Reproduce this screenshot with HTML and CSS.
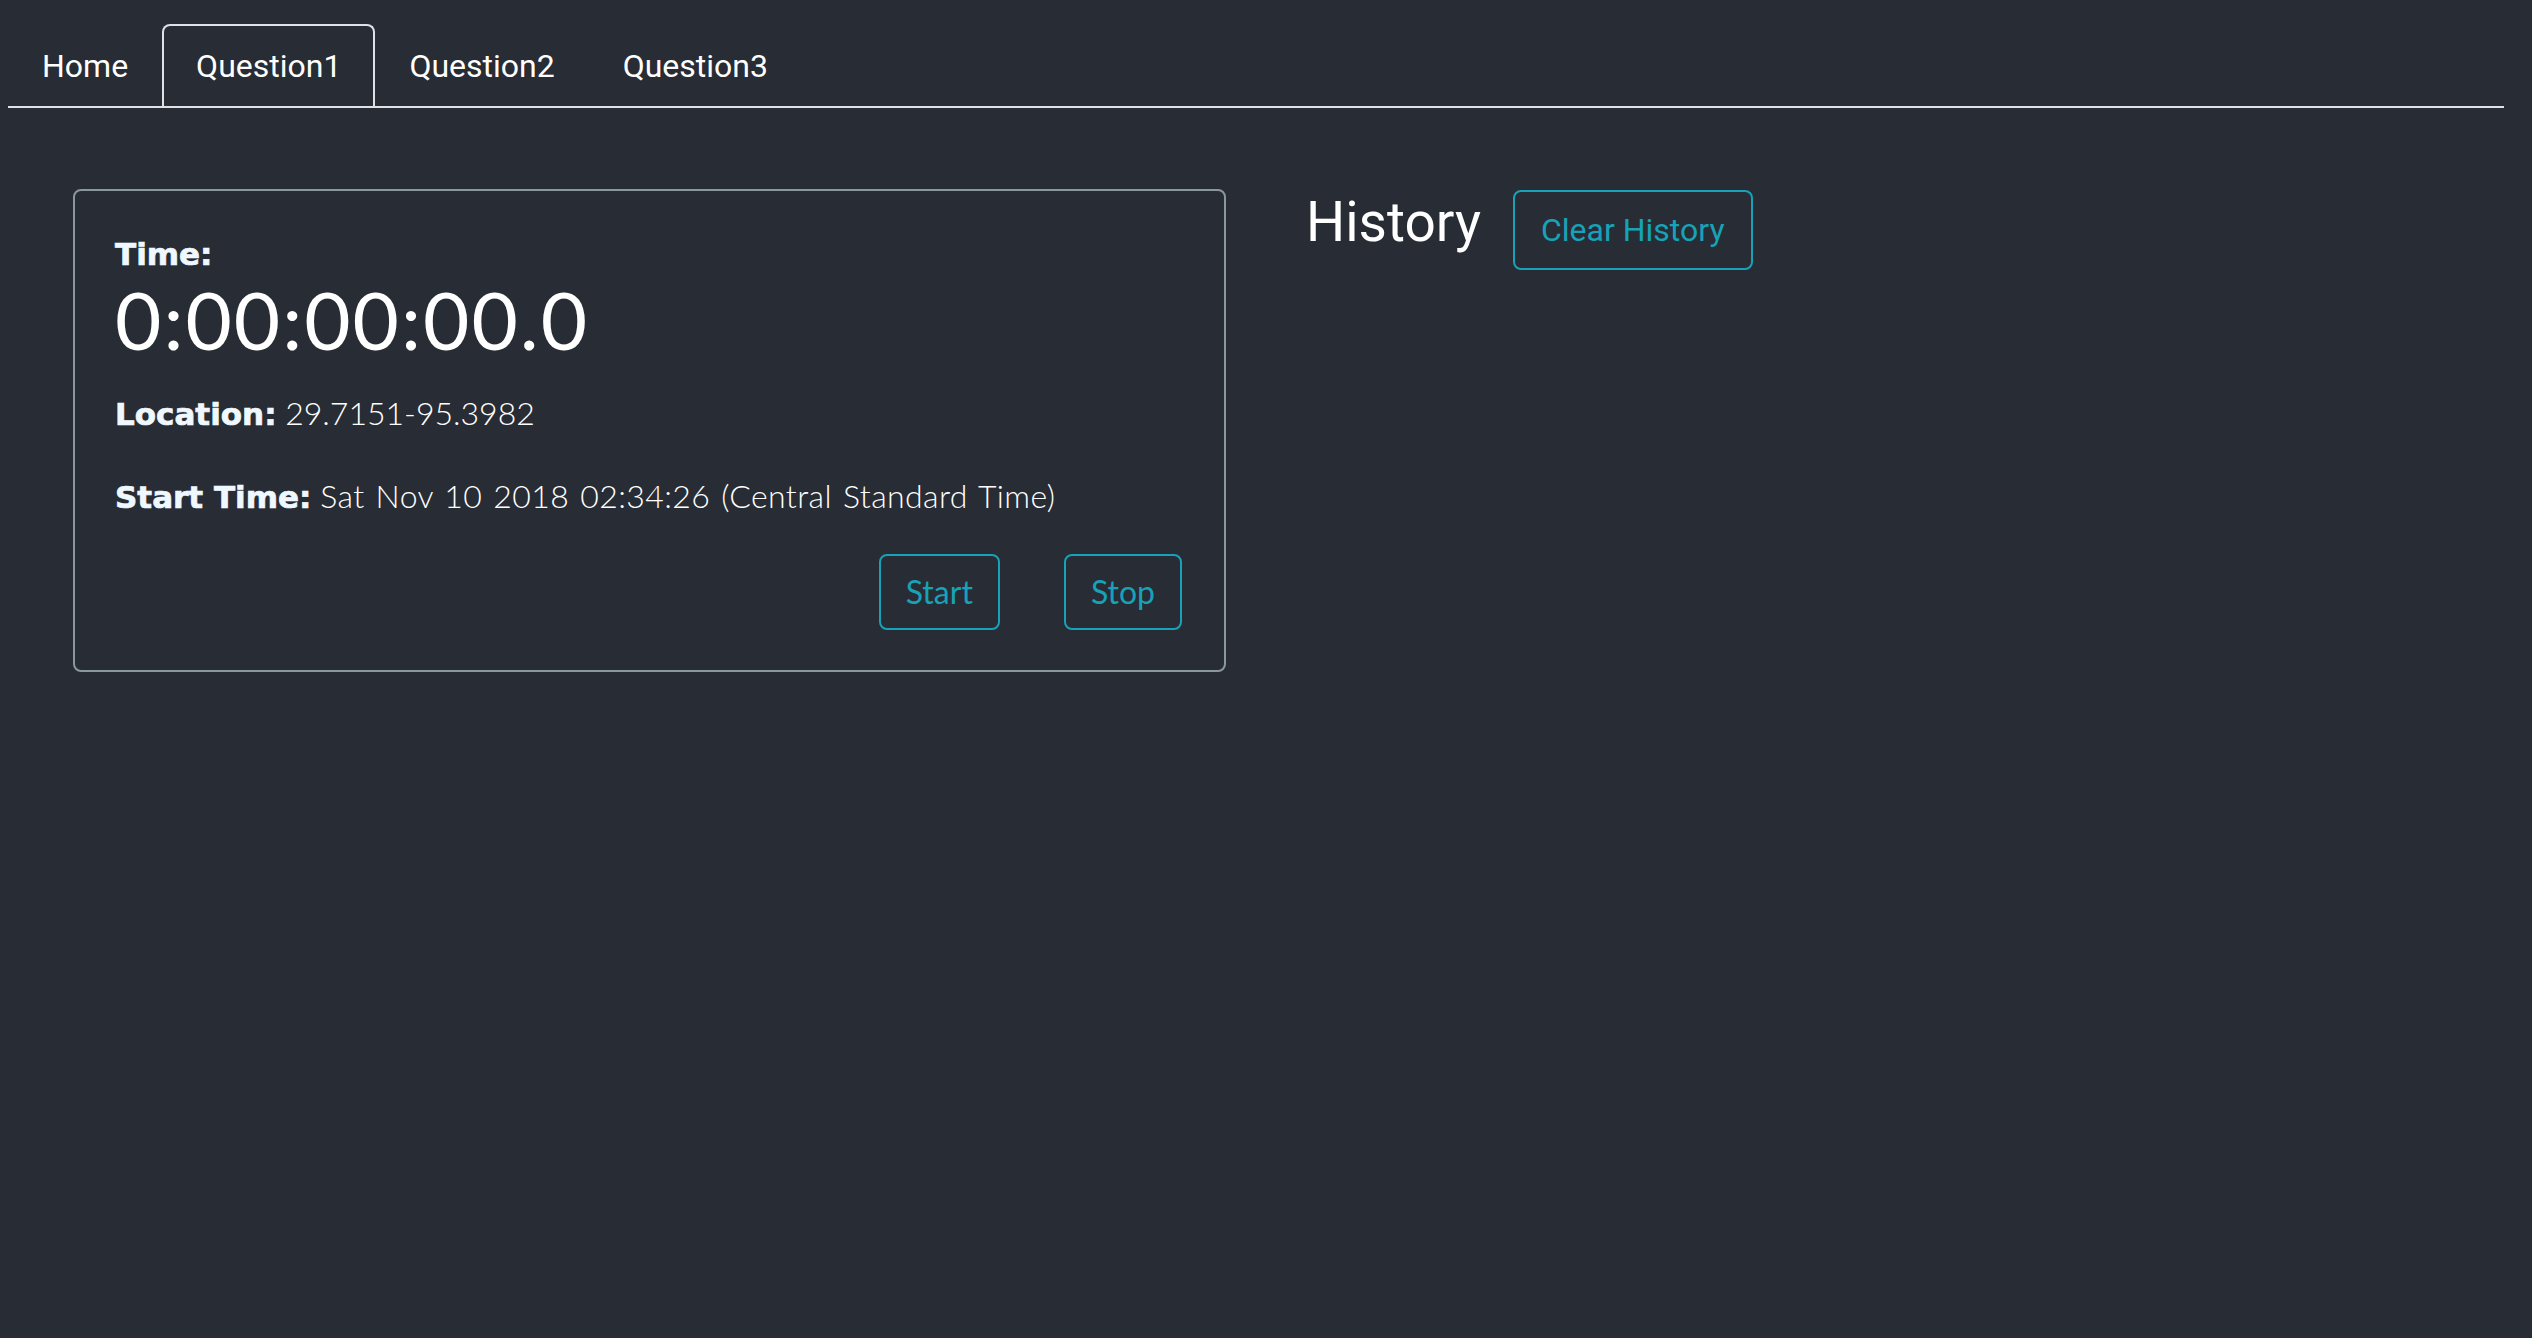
FILE: index.html
```html
<!DOCTYPE html>
<html lang="en">
<head>
<meta charset="utf-8">
<title>Question1</title>
<link rel="stylesheet" href="styles.css">
</head>
<body>
<nav class="tabs">
  <a class="tab">Home</a>
  <a class="tab active">Question1</a>
  <a class="tab">Question2</a>
  <a class="tab">Question3</a>
</nav>
<main class="row">
  <section class="card">
    <div class="label-line"><b class="label">Time:</b></div>
    <h1 class="clock">0:00:00:00.0</h1>
    <p class="info loc"><b class="label">Location:</b> 29.7151-95.3982</p>
    <p class="info start"><b class="label">Start Time:</b> <span class="start-val">Sat Nov 10 2018 02:34:26 (Central Standard Time)</span></p>
    <div class="actions">
      <button class="btn">Start</button>
      <button class="btn">Stop</button>
    </div>
  </section>
  <section class="history">
    <div class="history-head">
      <h3 class="history-title">History</h3>
      <button class="btn btn-clear">Clear History</button>
    </div>
  </section>
</main>
</body>
</html>
```
FILE: styles.css
```css
html, body {
  background: #282c34;
}
body {
  margin: 8px;
  color: #ffffff;
  font-family: "Lato", "Liberation Sans", sans-serif;
  font-size: 32px;
  line-height: 48px;
  min-height: 1322px;
}
.tabs {
  display: flex;
  margin: 16px 20px 0 0;
  border-bottom: 2px solid #dee2e6;
}
.tab {
  display: block;
  padding: 16px 32px;
  border: 2px solid transparent;
  border-bottom: 0;
  border-radius: 8px 8px 0 0;
  font-family: "Roboto", "Liberation Sans", sans-serif;
  font-size: 32px;
  line-height: 48px;
  color: #ffffff;
}
.tab.active {
  border-color: #dee2e6;
}
.row {
  display: flex;
  align-items: flex-start;
  gap: 80px;
  margin: 81px 0 0 65px;
}
.card {
  width: 1069px;
  padding: 40px;
  border: 2px solid #8a989e;
  border-radius: 8px;
}
.label {
  font-family: "DejaVu Sans", "Liberation Sans", sans-serif;
  font-weight: 700;
  font-size: 31px;
  color: #f0f8ff;
  -webkit-text-stroke: 0.7px #f0f8ff;
}
.label-line {
  height: 43px;
  line-height: 43px;
}
.clock {
  margin: 5px 0 0;
  font-family: "Lato", sans-serif;
  font-weight: 400;
  font-size: 80px;
  letter-spacing: 2px;
  line-height: 80px;
  height: 80px;
}
.info {
  margin: 0;
  height: 48px;
  line-height: 48px;
  font-weight: 300;
}
.loc {
  margin-top: 30px;
}
.start {
  margin-top: 35px;
}
.start-val {
  word-spacing: 2px;
  letter-spacing: 0.4px;
}
.actions {
  display: flex;
  justify-content: flex-end;
  gap: 64px;
  margin-top: 34px;
  margin-right: 2px;
}
.btn {
  background: transparent;
  border: 2px solid #17a2b8;
  border-radius: 8px;
  color: #17a2b8;
  font-family: "Lato", sans-serif;
  font-weight: 400;
  font-size: 32px;
  line-height: 48px;
  padding: 12px 25px;
  margin: 0;
}
.history-head {
  display: flex;
  align-items: baseline;
  gap: 32px;
}
.history-title {
  margin: 0;
  font-family: "Roboto", sans-serif;
  font-weight: 400;
  font-size: 55px;
  line-height: 67px;
}
.btn-clear {
  font-family: "Roboto", sans-serif;
  font-weight: 400;
  padding: 14px 26px;
  line-height: 48px;
}
```
